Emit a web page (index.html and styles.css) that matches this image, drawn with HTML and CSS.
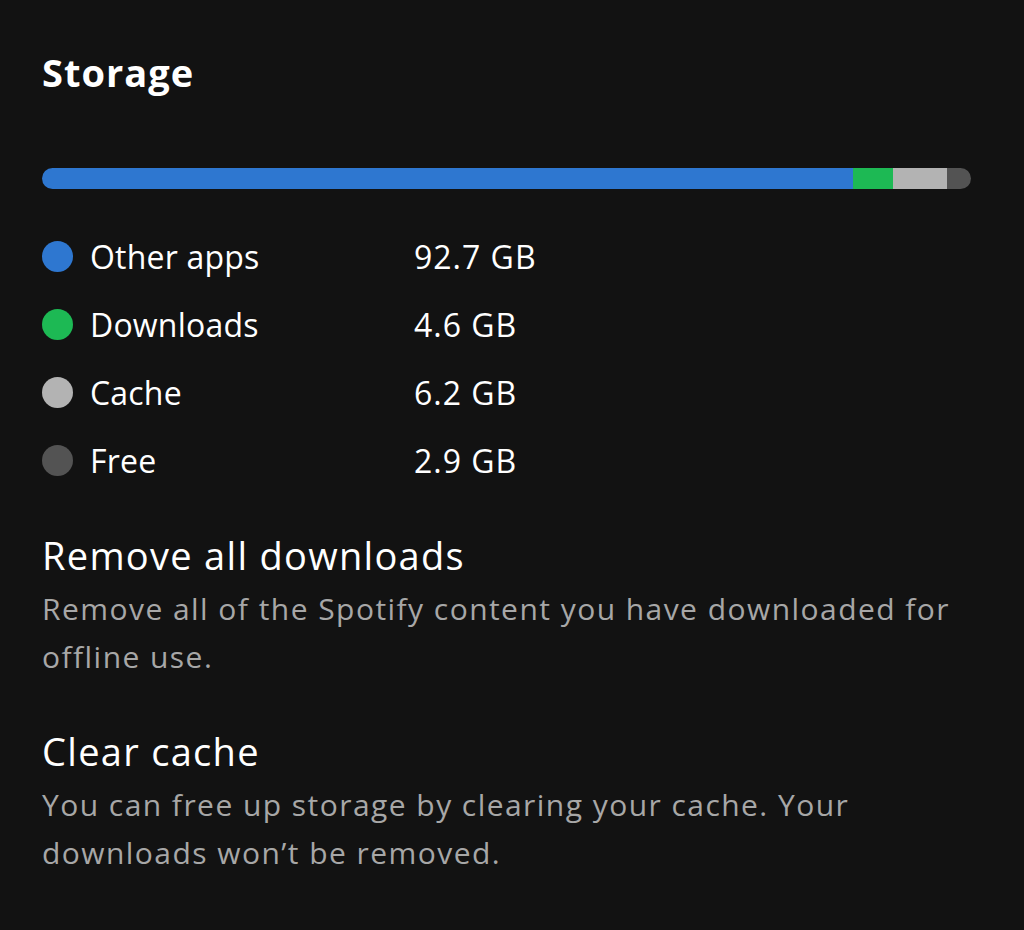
FILE: index.html
```html
<!DOCTYPE html>
<html>
<head>
<meta charset="utf-8">
<link rel="stylesheet" href="styles.css">
</head>
<body>
<main class="page">
  <h1 class="title">Storage</h1>
  <div class="bar">
    <div class="seg seg-apps" style="width:811px"></div>
    <div class="seg seg-downloads" style="width:40px"></div>
    <div class="seg seg-cache" style="width:54px"></div>
    <div class="seg seg-free"></div>
  </div>
  <ul class="legend">
    <li class="row"><span class="dot dot-apps"></span><span class="label">Other apps</span><span class="value">92.7 GB</span></li>
    <li class="row"><span class="dot dot-downloads"></span><span class="label">Downloads</span><span class="value">4.6 GB</span></li>
    <li class="row"><span class="dot dot-cache"></span><span class="label">Cache</span><span class="value">6.2 GB</span></li>
    <li class="row"><span class="dot dot-free"></span><span class="label">Free</span><span class="value">2.9 GB</span></li>
  </ul>
  <section class="action">
    <h2 class="action-title">Remove all downloads</h2>
    <p class="action-desc">Remove all of the Spotify content you have downloaded for offline use.</p>
  </section>
  <section class="action action-second">
    <h2 class="action-title">Clear cache</h2>
    <p class="action-desc">You can free up storage by clearing your cache. Your downloads won’t be removed.</p>
  </section>
</main>
</body>
</html>
```

FILE: styles.css
```css
html, body {
  margin: 0;
  padding: 0;
  background: #121212;
}
body {
  font-family: "Open Sans", "Noto Sans", sans-serif;
  color: #ffffff;
}
.page {
  padding: 50px 53px 0 42px;
  width: 929px;
}
.title {
  margin: 0;
  font-size: 38px;
  line-height: 44px;
  font-weight: 700;
  letter-spacing: 1px;
}
.bar {
  margin-top: 74px;
  height: 21px;
  display: flex;
  border-radius: 11px;
  overflow: hidden;
  width: 929px;
}
.seg { height: 100%; }
.seg-apps { background: #2e77d0; }
.seg-downloads { background: #1db954; }
.seg-cache { background: #b3b3b3; }
.seg-free { background: #535353; flex: 1; }
.legend {
  list-style: none;
  margin: 33px 0 0;
  padding: 0;
}
.row {
  display: flex;
  align-items: center;
  height: 68px;
  font-size: 32px;
}
.dot {
  width: 31px;
  height: 31px;
  border-radius: 50%;
  flex: none;
}
.dot-apps { background: #2e77d0; }
.dot-downloads { background: #1db954; }
.dot-cache { background: #b3b3b3; }
.dot-free { background: #535353; }
.label {
  margin-left: 17px;
  width: 324px;
  letter-spacing: 0.2px;
}
.value {
  letter-spacing: 1px;
}
.action { margin-top: 37px; }
.action-second { margin-top: 46px; }
.action-title {
  margin: 0;
  font-size: 38px;
  line-height: 48px;
  font-weight: 400;
  letter-spacing: 1.3px;
}
.action-desc {
  margin: 6px 0 0;
  font-size: 30px;
  line-height: 48px;
  color: #a7a7a7;
  letter-spacing: 1.45px;
}
```
